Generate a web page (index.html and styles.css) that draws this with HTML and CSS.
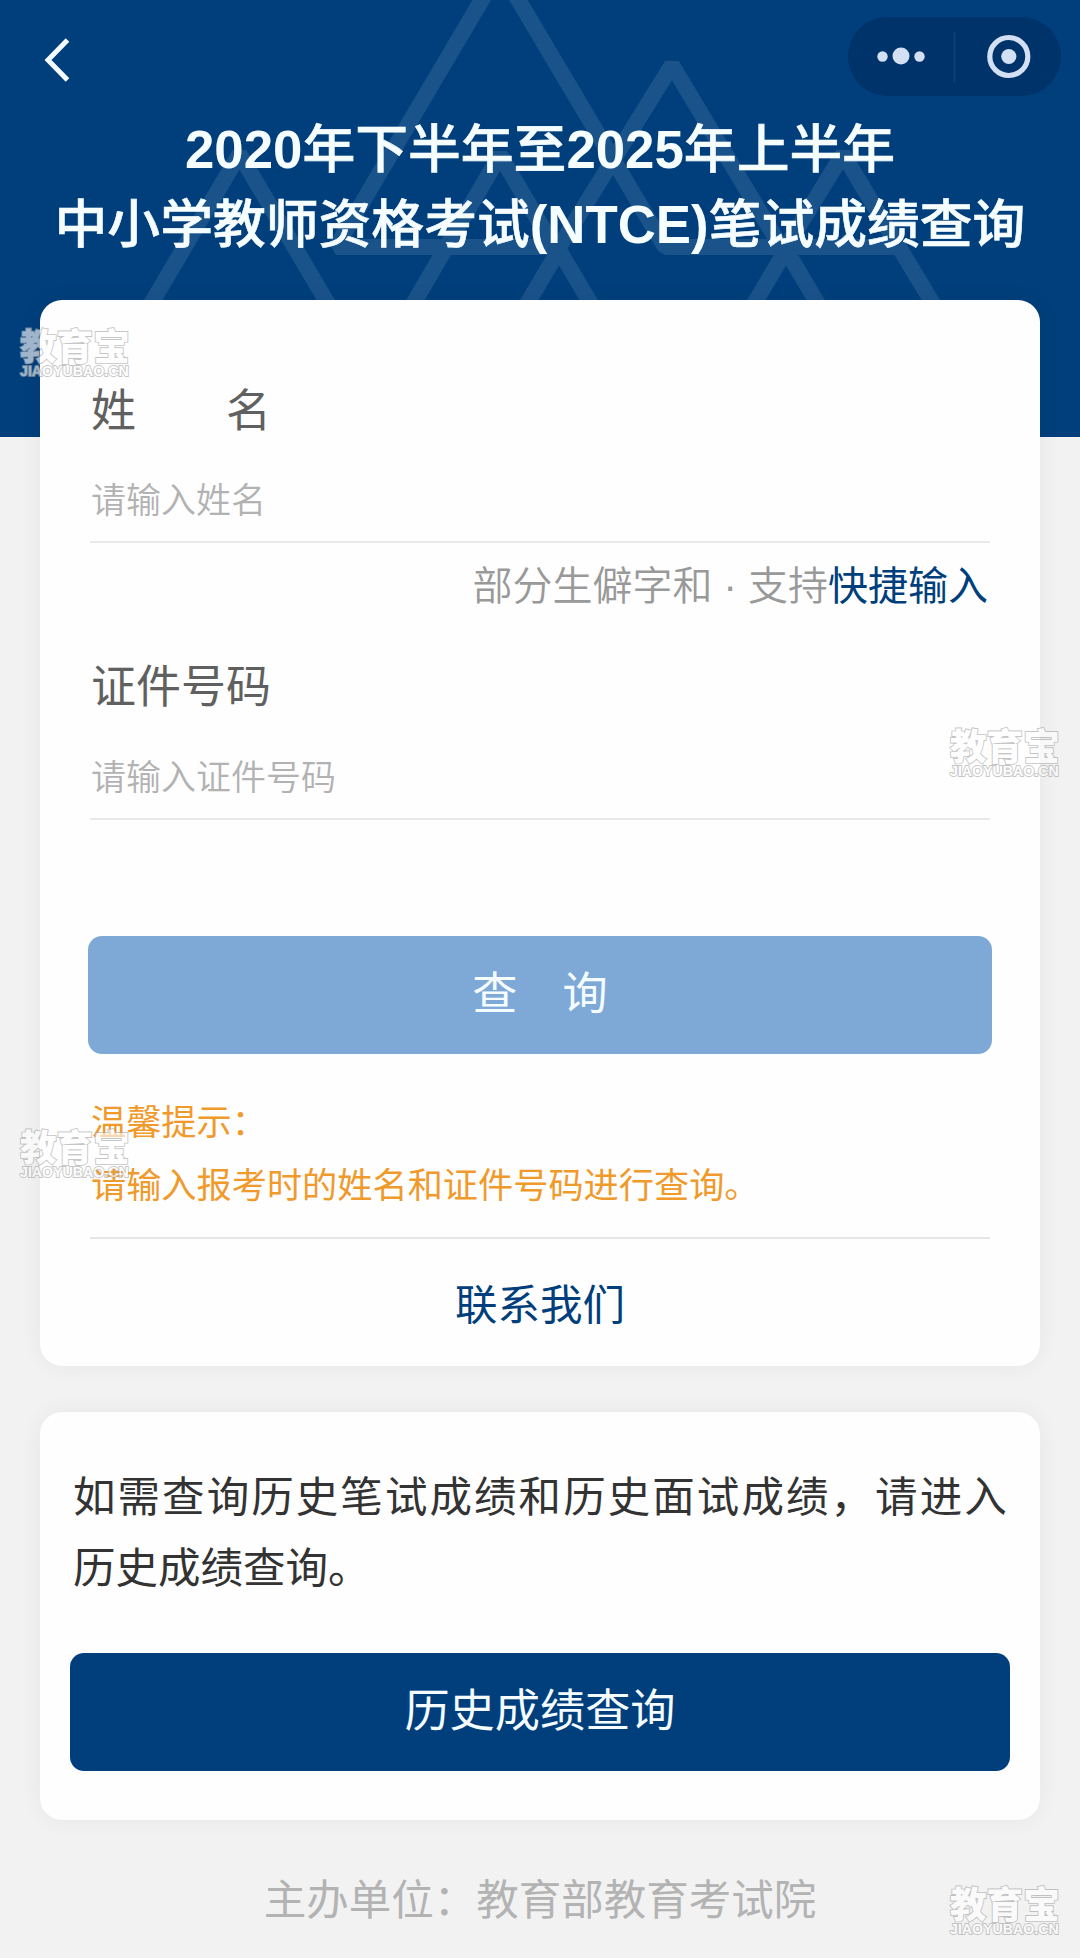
FILE: index.html
```html
<!DOCTYPE html>
<html lang="zh-CN">
<head>
<meta charset="utf-8">
<title>NTCE 笔试成绩查询</title>
<link rel="stylesheet" href="styles.css">
</head>
<body>
<div class="page">
  <header class="header">
    <svg class="pattern" width="1080" height="437" viewBox="0 0 1080 437" aria-hidden="true">
      <path d="M145 314 L239.5 154 L334 314"/>
      <path d="M500 -31 L336 247 H559 M500 -31 L665 247 H895"/>
      <path d="M405 318 L500 155 L554 247"/>
      <path d="M559 247 L672 65 L781 247"/>
      <path d="M521 314 L559 250 L597 314"/>
      <path d="M748 314 L786 250 L824 314"/>
      <path d="M786 247 L843 154 L938 312"/>
    </svg>
    <nav class="nav">
      <svg class="back" width="26" height="46" viewBox="0 0 26 46"><path d="M23.5 3 L4 23 L23.5 43"/></svg>
      <div class="capsule">
        <svg width="213" height="79" viewBox="0 0 213 79">
          <g class="capsule-icon"><circle cx="34.5" cy="39.5" r="5.2"/><circle cx="53" cy="39" r="8.5"/><circle cx="71.5" cy="39.5" r="5.2"/><circle cx="160.8" cy="39.5" r="7.6"/></g>
          <circle class="capsule-ring" cx="160.8" cy="39.5" r="19"/>
          <path class="capsule-divider" d="M106.5 15 V66"/>
        </svg>
      </div>
    </nav>
    <h1 class="title"><span class="latin">2020</span>年下半年至<span class="latin">2025</span>年上半年<br>中小学教师资格考试<span class="latin">(NTCE)</span>笔试成绩查询</h1>
  </header>

  <main class="main">
    <section class="card query">
      <div class="label">姓　　名</div>
      <div class="input">请输入姓名</div>
      <div class="hint">部分生僻字和<span class="dot"> · </span>支持<a>快捷输入</a></div>
      <div class="label label-id">证件号码</div>
      <div class="input">请输入证件号码</div>
      <div class="button button-query">查　询</div>
      <div class="tips">温馨提示：<br>请输入报考时的姓名和证件号码进行查询。</div>
      <div class="contact">联系我们</div>
    </section>
    <section class="card history">
      <p class="history-text"><span class="spread">如需查询历史笔试成绩和历史面试成绩，请进入</span><br>历史成绩查询。</p>
      <div class="button button-history">历史成绩查询</div>
    </section>
  </main>
  <footer class="footer">主办单位：教育部教育考试院</footer>

  <div class="mark mark-1"><b>教育宝</b><i>JIAOYUBAO.CN</i></div>
  <div class="mark mark-2"><b>教育宝</b><i>JIAOYUBAO.CN</i></div>
  <div class="mark mark-3"><b>教育宝</b><i>JIAOYUBAO.CN</i></div>
  <div class="mark mark-4"><b>教育宝</b><i>JIAOYUBAO.CN</i></div>
</div>
</body>
</html>
```
FILE: styles.css
```css
* { box-sizing: border-box; }

body {
  margin: 0;
  background: #f2f2f2;
  font-family: "Noto Sans CJK SC", "Liberation Sans", sans-serif;
}

.page {
  position: relative;
  width: 1080px;
  height: 1958px;
  overflow: hidden;
}

.header {
  position: relative;
  height: 437px;
  background: #003f7c;
}

.pattern {
  position: absolute;
  inset: 0;
  fill: none;
  stroke: #1a528a;
  stroke-width: 16;
  stroke-linejoin: bevel;
}

.nav {
  position: relative;
  display: flex;
  justify-content: space-between;
  align-items: flex-start;
  height: 108px;
  padding: 17px 19px 0 44px;
}

.back {
  margin-top: 19.5px;
  fill: none;
  stroke: #f4fbff;
  stroke-width: 5;
}

.capsule {
  width: 213px;
  height: 79px;
  border-radius: 40px;
  background: #003369;
}

.capsule-icon { fill: #d3dff2; }
.capsule-ring { fill: none; stroke: #d3dff2; stroke-width: 5.2; }
.capsule-divider { stroke: #123f75; stroke-width: 2; }

.title {
  position: relative;
  margin: 0;
  color: #f6fdff;
  font-size: 52.8px;
  font-weight: 500;
  line-height: 75px;
  text-align: center;
  white-space: nowrap;
  -webkit-text-stroke: 0.6px #f6fdff;
}

.latin {
  font-family: "Liberation Sans", sans-serif;
  font-weight: 700;
  line-height: 1;
  -webkit-text-stroke: 0;
}

.main {
  position: relative;
  display: flex;
  flex-direction: column;
  gap: 46px;
  margin-top: -137px;
  padding: 0 40px;
}

.card {
  border-radius: 22px;
  background: #fefefe;
  box-shadow: 0 0 24px rgba(0, 0, 0, 0.05);
}

.query {
  height: 1066px;
  padding: 78px 50px 0;
}

.label {
  padding-left: 1px;
  color: #606060;
  font-size: 45px;
  line-height: 60px;
}

.label-id { margin-top: 41px; }

.input {
  margin-top: 35px;
  padding: 0 0 18px 1px;
  border-bottom: 2px solid #e9e9e9;
  color: #b2b2b2;
  font-size: 35px;
  font-weight: 350;
  line-height: 50px;
}

.label-id + .input { margin-top: 36px; }

.hint {
  margin-top: 10px;
  padding-right: 2px;
  color: #999;
  font-size: 40px;
  font-weight: 350;
  line-height: 60px;
  text-align: right;
  white-space: nowrap;
}

.hint a { color: #003f7c; font-weight: 400; }
.dot { font-family: "Liberation Sans", sans-serif; line-height: 1; }

.button {
  display: flex;
  align-items: center;
  justify-content: center;
  height: 118px;
  border-radius: 14px;
  color: #f4fcff;
  font-size: 45.2px;
  line-height: 60px;
}

.button-query {
  margin: 116px -2px 0;
  padding-bottom: 8px;
  background: #7ea9d7;
}

.tips {
  height: 151px;
  margin-top: 34px;
  margin-bottom: 33px;
  padding-left: 1px;
  border-bottom: 2px solid #e6e6e6;
  color: #f09a2c;
  font-size: 35.2px;
  line-height: 63px;
}

.contact {
  color: #003f7c;
  font-size: 42.5px;
  line-height: 60px;
  text-align: center;
}

.history {
  height: 408px;
  padding: 47px 30px 0;
}

.history-text {
  margin: 0 1px 53px 3px;
  color: #333;
  font-size: 42.5px;
  line-height: 70.5px;
  white-space: nowrap;
}

.spread { letter-spacing: 2.06px; }

.button-history {
  padding-bottom: 8px;
  background: #003f7c;
}

.footer {
  margin-top: 47px;
  color: #b3b3b3;
  font-size: 42.5px;
  line-height: 60px;
  text-align: center;
}

.mark {
  position: absolute;
  display: flex;
  flex-direction: column;
  width: 112px;
  color: #fff;
  opacity: 0.62;
  white-space: nowrap;
  -webkit-text-stroke: 1.8px #a4a4a4;
  paint-order: stroke fill;
}

.mark b {
  font-size: 36.6px;
  font-weight: 900;
  line-height: 36px;
}

.mark i {
  font: 700 14.2px/16px "Liberation Sans", sans-serif;
}

.mark-1 { left: 20px; top: 327px; }
.mark-2 { left: 950px; top: 727px; }
.mark-3 { left: 20px; top: 1128px; }
.mark-4 { left: 950px; top: 1885px; }
```
